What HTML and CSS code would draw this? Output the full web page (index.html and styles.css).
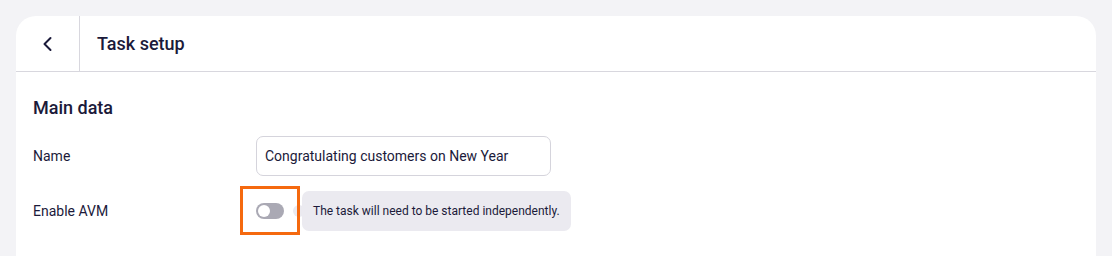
FILE: index.html
```
<!DOCTYPE html>
<html lang="en">
<head>
    <meta charset="UTF-8">
    <meta name="viewport" content="width=device-width, initial-scale=1.0">
    <title>Task setup</title>
    <link rel="stylesheet" href="styles.css">
</head>
<body>
    <div class="card">
        <!-- Header -->
        <div class="card-header">
            <button class="back-btn" aria-label="Back">
                <svg width="16" height="16" viewBox="0 0 16 16" fill="none">
                    <path d="M10.5 2L4.5 8l6 6" stroke="#1b1a3a" stroke-width="2" stroke-linecap="round" stroke-linejoin="round"/>
                </svg>
            </button>
            <h1 class="title">Task setup</h1>
        </div>

        <!-- Main data -->
        <div class="section">
            <h2>Main data</h2>
            <div class="row">
                <label class="label">Name</label>
                <input class="text-input" type="text" value="Congratulating customers on New Year">
            </div>
            <div class="row">
                <label class="label">Enable AVM</label>
                <div class="toggle-wrap">
                    <div class="highlight">
                        <span class="toggle"><span class="knob"></span></span>
                    </div>
                    <div class="tooltip">The task will need to be started independently.</div>
                </div>
            </div>
        </div>
    </div>
</body>
</html>
```
FILE: styles.css
```
body {
    font-family: Roboto, "Noto Sans", sans-serif;
    margin: 0;
    padding: 16px 16px 0;
    background-color: #f3f3f6;
    color: #1b1a3a;
}

.card {
    background: #fff;
    border-radius: 20px 20px 0 0;
    height: 240px;
}

.card-header {
    display: flex;
    align-items: center;
    height: 55px;
    border-bottom: 1px solid #d8d7de;
}

.back-btn {
    width: 64px;
    height: 55px;
    border: none;
    border-right: 1px solid #d8d7de;
    background: none;
    padding: 0;
    display: flex;
    align-items: center;
    justify-content: center;
    cursor: pointer;
}

.title {
    margin: 0 0 0 17px;
    font-size: 18px;
    font-weight: 500;
}

.section {
    padding: 24px 17px 0;
}

.section h2 {
    margin: 0 0 16px;
    font-size: 18px;
    font-weight: 500;
    line-height: 24px;
}

.row {
    display: flex;
    align-items: center;
    margin-bottom: 10px;
}

.label {
    width: 223px;
    font-size: 14px;
}

.text-input {
    width: 295px;
    height: 40px;
    box-sizing: border-box;
    border: 1px solid #d5d4dc;
    border-radius: 7px;
    padding: 0 8px;
    font-family: inherit;
    font-size: 14px;
    color: #1b1a3a;
}

.toggle-wrap {
    display: flex;
    align-items: center;
    margin-left: -16px;
}

.highlight {
    position: relative;
    z-index: 1;
    width: 60px;
    height: 49px;
    box-sizing: border-box;
    border: 3px solid #f5690f;
    display: flex;
    align-items: center;
    justify-content: center;
}

.toggle {
    width: 28px;
    height: 16px;
    border-radius: 8px;
    background: #aaa9b4;
    display: flex;
    align-items: center;
    padding: 0 2px;
    box-sizing: border-box;
}

.knob {
    width: 12px;
    height: 12px;
    border-radius: 50%;
    background: #fff;
}

.tooltip {
    position: relative;
    margin-left: 2px;
    height: 40px;
    display: flex;
    align-items: center;
    padding: 0 11px;
    border-radius: 7px;
    background: #ebeaf0;
    font-size: 12px;
}

.tooltip::before {
    content: "";
    position: absolute;
    left: -9px;
    top: 14px;
    width: 12px;
    height: 12px;
    border-radius: 50%;
    background: #ebeaf0;
}
```
